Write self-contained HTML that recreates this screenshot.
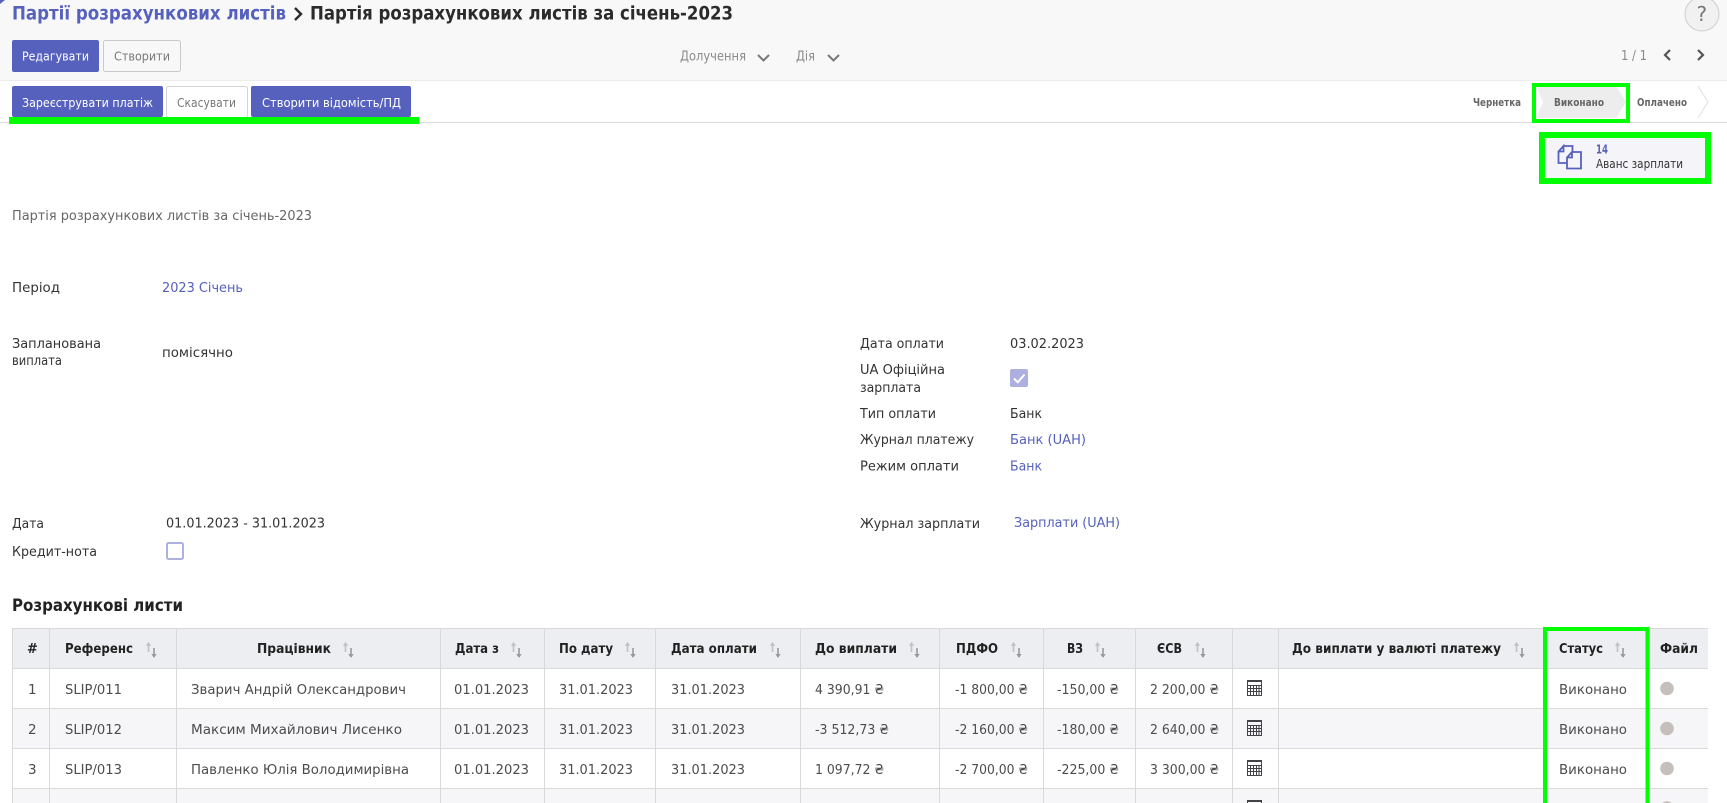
<!DOCTYPE html>
<html lang="uk">
<head>
<meta charset="utf-8">
<title>Партія розрахункових листів за січень-2023</title>
<style>
html,body{margin:0;padding:0;background:#fff;width:1727px;height:803px;overflow:hidden}
svg{display:block}
text{font-family:"DejaVu Sans","Liberation Sans",sans-serif;font-size:13.5px;fill:#3c3c3c;white-space:pre}
.b{font-weight:700}
.lnk{fill:#5661bd}
.lab{fill:#333}
.btn{fill:#fff;font-size:12.5px}
.sec{fill:#777;font-size:12.5px}
.st{fill:#666;font-size:10.5px;font-weight:700}
.th{fill:#222;font-size:13px;font-weight:700}
.td{fill:#4c4c4c}
</style>
</head>
<body>
<svg width="1727" height="803" viewBox="0 0 1727 803" xmlns="http://www.w3.org/2000/svg">
<defs>
<g id="sort">
<path d="M2.5 10V2.5" stroke="#c0c0c0" stroke-width="1.6" fill="none"/>
<path d="M-0.2 3.8L2.5 0L5.2 3.8Z" fill="#c0c0c0"/>
<path d="M8 6V13" stroke="#999" stroke-width="1.6" fill="none"/>
<path d="M5.3 12L8 16L10.700 12Z" fill="#999"/>
</g>
<g id="calc" fill="none" stroke="#434347" stroke-width="1">
<rect x="0.5" y="0.5" width="14" height="15"/>
<path d="M0.5 5.5H14.5M0.5 8.5H14.5M0.5 11.5H14.5M3.5 5.5V15.500M6.5 5.5V15.500M9.5 5.5V15.500M12 5.5V15.500"/>
<path d="M0.5 1.5H14.500"/>
</g>
</defs>

<!-- control panel -->
<rect x="0" y="0" width="1727" height="80" fill="#f8f8f8"/>
<rect x="0" y="80" width="1727" height="1" fill="#ececec"/>
<path d="M0 0H5L0 4Z" fill="#5661bd"/>
<text x="12" y="19.500" class="b lnk" style="font-size:18.500px" textLength="274" lengthAdjust="spacingAndGlyphs">Партії розрахункових листів</text>
<path d="M295 8L301 14L295 20" fill="none" stroke="#2b2b2b" stroke-width="2.400"/>
<text x="310" y="19.500" class="b" style="font-size:18.500px;fill:#2b2b2b" textLength="423" lengthAdjust="spacingAndGlyphs">Партія розрахункових листів за січень-2023</text>

<circle cx="1702" cy="14" r="17" fill="#f1f1f1" stroke="#cfcfcf"/>
<text x="1696.500" y="21" style="font-size:20px;fill:#777">?</text>

<rect x="12" y="40" width="87" height="32" rx="2" fill="#5661bd"/>
<text x="22" y="60.500" class="btn" textLength="67" lengthAdjust="spacingAndGlyphs">Редагувати</text>
<rect x="103.500" y="40.500" width="77" height="31" rx="2" fill="#f8f8f8" stroke="#c9c9c9"/>
<text x="114" y="60.500" class="sec" textLength="56" lengthAdjust="spacingAndGlyphs">Створити</text>

<text x="680" y="60.500" style="fill:#8a8a8a" textLength="66" lengthAdjust="spacingAndGlyphs">Долучення</text>
<path d="M758 55L763.500 60.500L769 55" fill="none" stroke="#77777c" stroke-width="2"/>
<text x="796" y="60.500" style="fill:#8a8a8a" textLength="19" lengthAdjust="spacingAndGlyphs">Дія</text>
<path d="M828 55L833.500 60.500L839 55" fill="none" stroke="#77777c" stroke-width="2"/>

<text x="1621" y="60" style="fill:#8a8a8a;font-size:13px" textLength="26" lengthAdjust="spacingAndGlyphs">1 / 1</text>
<path d="M1670 50L1665 55L1670 60" fill="none" stroke="#555" stroke-width="2.200"/>
<path d="M1698 50L1703 55L1698 60" fill="none" stroke="#555" stroke-width="2.200"/>

<!-- status bar -->
<rect x="0" y="122" width="1727" height="1" fill="#dadada"/>
<rect x="12" y="86" width="151" height="31" rx="2" fill="#5661bd"/>
<text x="22" y="107" class="btn" textLength="131" lengthAdjust="spacingAndGlyphs">Зареєструвати платіж</text>
<rect x="166.500" y="86.500" width="81" height="31" rx="2" fill="#fff" stroke="#d5d5d5"/>
<text x="177" y="107" class="sec" textLength="59" lengthAdjust="spacingAndGlyphs">Скасувати</text>
<rect x="251" y="86" width="160" height="31" rx="2" fill="#5661bd"/>
<text x="262" y="107" class="btn" textLength="139" lengthAdjust="spacingAndGlyphs">Створити відомість/ПД</text>
<rect x="9" y="117" width="410" height="7" fill="#00ff00"/>

<text x="1473" y="106" class="st" textLength="48" lengthAdjust="spacingAndGlyphs">Чернетка</text>
<path d="M1536 86H1616L1626 102L1616 118H1536L1543 102Z" fill="#ededed"/>
<text x="1554" y="106" class="st" textLength="50" lengthAdjust="spacingAndGlyphs">Виконано</text>
<rect x="1534" y="85" width="94" height="36" fill="none" stroke="#00ff00" stroke-width="4"/>
<text x="1637" y="106" class="st" textLength="50" lengthAdjust="spacingAndGlyphs">Оплачено</text>
<path d="M1698 86L1708 102L1698 118" fill="none" stroke="#e0e0e0"/>

<!-- smart button -->
<rect x="1545" y="138" width="160" height="40" fill="#f5f5f9"/>
<rect x="1542" y="135" width="166" height="46" fill="none" stroke="#00ff00" stroke-width="6"/>
<path d="M1563.500 146H1572.500V151.500M1566.500 163H1558.500V151.500L1563.500 146V151.500H1558.500" fill="none" stroke="#5661bd" stroke-width="1.800"/>
<path d="M1572 152H1581V168.500H1567V157.500L1572 152V157.500H1567" fill="none" stroke="#5661bd" stroke-width="1.800"/>
<text x="1596" y="153.500" class="b lnk" style="font-size:12px" textLength="12" lengthAdjust="spacingAndGlyphs">14</text>
<text x="1596" y="168" style="font-size:12px;fill:#333" textLength="87" lengthAdjust="spacingAndGlyphs">Аванс зарплати</text>

<!-- form -->
<text x="12" y="220" style="fill:#666" textLength="300" lengthAdjust="spacingAndGlyphs">Партія розрахункових листів за січень-2023</text>

<text x="12" y="292" class="lab" textLength="48" lengthAdjust="spacingAndGlyphs">Період</text>
<text x="162" y="292" class="lnk" textLength="81" lengthAdjust="spacingAndGlyphs">2023 Січень</text>
<text x="12" y="348" class="lab" textLength="89" lengthAdjust="spacingAndGlyphs">Запланована</text>
<text x="12" y="365" class="lab" textLength="50" lengthAdjust="spacingAndGlyphs">виплата</text>
<text x="162" y="357" class="lab" textLength="71" lengthAdjust="spacingAndGlyphs">помісячно</text>

<text x="860" y="348" class="lab" textLength="84" lengthAdjust="spacingAndGlyphs">Дата оплати</text>
<text x="1010" y="348" class="lab" textLength="74" lengthAdjust="spacingAndGlyphs">03.02.2023</text>
<text x="860" y="374" class="lab" textLength="85" lengthAdjust="spacingAndGlyphs">UA Офіційна</text>
<text x="860" y="392" class="lab" textLength="61" lengthAdjust="spacingAndGlyphs">зарплата</text>
<rect x="1010" y="369" width="18" height="18" rx="2" fill="#adb0de"/>
<path d="M1014 378.500L1017.800 382.300L1024.500 374.500" fill="none" stroke="#fff" stroke-width="2"/>
<text x="860" y="418" class="lab" textLength="76" lengthAdjust="spacingAndGlyphs">Тип оплати</text>
<text x="1010" y="418" class="lab" textLength="32" lengthAdjust="spacingAndGlyphs">Банк</text>
<text x="860" y="444" class="lab" textLength="114" lengthAdjust="spacingAndGlyphs">Журнал платежу</text>
<text x="1010" y="444" class="lnk" textLength="76" lengthAdjust="spacingAndGlyphs">Банк (UAH)</text>
<text x="860" y="470.500" class="lab" textLength="99" lengthAdjust="spacingAndGlyphs">Режим оплати</text>
<text x="1010" y="470.500" class="lnk" textLength="32" lengthAdjust="spacingAndGlyphs">Банк</text>

<text x="12" y="528" class="lab" textLength="32" lengthAdjust="spacingAndGlyphs">Дата</text>
<text x="166" y="527.500" class="lab" textLength="159" lengthAdjust="spacingAndGlyphs">01.01.2023 - 31.01.2023</text>
<text x="12" y="556" class="lab" textLength="85" lengthAdjust="spacingAndGlyphs">Кредит-нота</text>
<rect x="167" y="543" width="16" height="16" rx="1.500" fill="#fff" stroke="#adb0de" stroke-width="2"/>
<text x="860" y="528" class="lab" textLength="120" lengthAdjust="spacingAndGlyphs">Журнал зарплати</text>
<text x="1014" y="527" class="lnk" textLength="106" lengthAdjust="spacingAndGlyphs">Зарплати (UAH)</text>

<!-- table -->
<text x="12" y="611" class="b" style="font-size:16.500px;fill:#222" textLength="171" lengthAdjust="spacingAndGlyphs">Розрахункові листи</text>

<rect x="12" y="628" width="1696" height="40" fill="#edeef1"/>
<rect x="12" y="708" width="1696" height="40" fill="#f6f6f9"/>
<rect x="12" y="788" width="1696" height="15" fill="#f6f6f9"/>
<g fill="#d9d9d9">
<rect x="12" y="628" width="1696" height="1"/>
<rect x="12" y="668" width="1696" height="1"/>
<rect x="12" y="708" width="1696" height="1"/>
<rect x="12" y="748" width="1696" height="1"/>
<rect x="12" y="788" width="1696" height="1"/>
<rect x="12" y="628" width="1" height="175"/>
<rect x="49" y="628" width="1" height="175"/>
<rect x="176" y="628" width="1" height="175"/>
<rect x="440" y="628" width="1" height="175"/>
<rect x="544" y="628" width="1" height="175"/>
<rect x="655" y="628" width="1" height="175"/>
<rect x="800" y="628" width="1" height="175"/>
<rect x="939" y="628" width="1" height="175"/>
<rect x="1043" y="628" width="1" height="175"/>
<rect x="1135" y="628" width="1" height="175"/>
<rect x="1232" y="628" width="1" height="175"/>
<rect x="1278" y="628" width="1" height="175"/>
</g>

<text x="27" y="653" class="th">#</text>
<text x="65" y="653" class="th" textLength="68" lengthAdjust="spacingAndGlyphs">Референс</text>
<text x="257" y="653" class="th" textLength="74" lengthAdjust="spacingAndGlyphs">Працівник</text>
<text x="455" y="653" class="th" textLength="44" lengthAdjust="spacingAndGlyphs">Дата з</text>
<text x="559" y="653" class="th" textLength="54" lengthAdjust="spacingAndGlyphs">По дату</text>
<text x="671" y="653" class="th" textLength="86" lengthAdjust="spacingAndGlyphs">Дата оплати</text>
<text x="815" y="653" class="th" textLength="82" lengthAdjust="spacingAndGlyphs">До виплати</text>
<text x="956" y="653" class="th" textLength="42" lengthAdjust="spacingAndGlyphs">ПДФО</text>
<text x="1067" y="653" class="th" textLength="16" lengthAdjust="spacingAndGlyphs">ВЗ</text>
<text x="1157" y="653" class="th" textLength="25" lengthAdjust="spacingAndGlyphs">ЄСВ</text>
<text x="1292" y="653" class="th" textLength="209" lengthAdjust="spacingAndGlyphs">До виплати у валюті платежу</text>
<text x="1559" y="653" class="th" textLength="44" lengthAdjust="spacingAndGlyphs">Статус</text>
<text x="1660" y="653" class="th" textLength="38" lengthAdjust="spacingAndGlyphs">Файл</text>

<use href="#sort" x="146" y="642"/>
<use href="#sort" x="343" y="642"/>
<use href="#sort" x="511" y="642"/>
<use href="#sort" x="625" y="642"/>
<use href="#sort" x="770" y="642"/>
<use href="#sort" x="909" y="642"/>
<use href="#sort" x="1011" y="642"/>
<use href="#sort" x="1095" y="642"/>
<use href="#sort" x="1195" y="642"/>
<use href="#sort" x="1514" y="642"/>
<use href="#sort" x="1615" y="642"/>

<!-- row 1 -->
<text x="28" y="694" class="td">1</text>
<text x="65" y="694" class="td" textLength="57" lengthAdjust="spacingAndGlyphs">SLIP/011</text>
<text x="191" y="694" class="td" textLength="215" lengthAdjust="spacingAndGlyphs">Зварич Андрій Олександрович</text>
<text x="454" y="694" class="td" textLength="75" lengthAdjust="spacingAndGlyphs">01.01.2023</text>
<text x="559" y="694" class="td" textLength="74" lengthAdjust="spacingAndGlyphs">31.01.2023</text>
<text x="671" y="694" class="td" textLength="74" lengthAdjust="spacingAndGlyphs">31.01.2023</text>
<text x="815" y="694" class="td" textLength="69" lengthAdjust="spacingAndGlyphs">4 390,91 ₴</text>
<text x="955" y="694" class="td" textLength="73" lengthAdjust="spacingAndGlyphs">-1 800,00 ₴</text>
<text x="1057" y="694" class="td" textLength="62" lengthAdjust="spacingAndGlyphs">-150,00 ₴</text>
<text x="1150" y="694" class="td" textLength="69" lengthAdjust="spacingAndGlyphs">2 200,00 ₴</text>
<use href="#calc" x="1247" y="680"/>
<text x="1559" y="694" class="td" textLength="68" lengthAdjust="spacingAndGlyphs">Виконано</text>
<circle cx="1667" cy="688.500" r="6.800" fill="#c4bfbb"/>

<!-- row 2 -->
<text x="28" y="734" class="td">2</text>
<text x="65" y="734" class="td" textLength="57" lengthAdjust="spacingAndGlyphs">SLIP/012</text>
<text x="191" y="734" class="td" textLength="211" lengthAdjust="spacingAndGlyphs">Максим Михайлович Лисенко</text>
<text x="454" y="734" class="td" textLength="75" lengthAdjust="spacingAndGlyphs">01.01.2023</text>
<text x="559" y="734" class="td" textLength="74" lengthAdjust="spacingAndGlyphs">31.01.2023</text>
<text x="671" y="734" class="td" textLength="74" lengthAdjust="spacingAndGlyphs">31.01.2023</text>
<text x="815" y="734" class="td" textLength="74" lengthAdjust="spacingAndGlyphs">-3 512,73 ₴</text>
<text x="955" y="734" class="td" textLength="73" lengthAdjust="spacingAndGlyphs">-2 160,00 ₴</text>
<text x="1057" y="734" class="td" textLength="62" lengthAdjust="spacingAndGlyphs">-180,00 ₴</text>
<text x="1150" y="734" class="td" textLength="69" lengthAdjust="spacingAndGlyphs">2 640,00 ₴</text>
<use href="#calc" x="1247" y="720"/>
<text x="1559" y="734" class="td" textLength="68" lengthAdjust="spacingAndGlyphs">Виконано</text>
<circle cx="1667" cy="728.500" r="6.800" fill="#c4bfbb"/>

<!-- row 3 -->
<text x="28" y="774" class="td">3</text>
<text x="65" y="774" class="td" textLength="57" lengthAdjust="spacingAndGlyphs">SLIP/013</text>
<text x="191" y="774" class="td" textLength="218" lengthAdjust="spacingAndGlyphs">Павленко Юлія Володимирівна</text>
<text x="454" y="774" class="td" textLength="75" lengthAdjust="spacingAndGlyphs">01.01.2023</text>
<text x="559" y="774" class="td" textLength="74" lengthAdjust="spacingAndGlyphs">31.01.2023</text>
<text x="671" y="774" class="td" textLength="74" lengthAdjust="spacingAndGlyphs">31.01.2023</text>
<text x="815" y="774" class="td" textLength="69" lengthAdjust="spacingAndGlyphs">1 097,72 ₴</text>
<text x="955" y="774" class="td" textLength="73" lengthAdjust="spacingAndGlyphs">-2 700,00 ₴</text>
<text x="1057" y="774" class="td" textLength="62" lengthAdjust="spacingAndGlyphs">-225,00 ₴</text>
<text x="1150" y="774" class="td" textLength="69" lengthAdjust="spacingAndGlyphs">3 300,00 ₴</text>
<use href="#calc" x="1247" y="760"/>
<text x="1559" y="774" class="td" textLength="68" lengthAdjust="spacingAndGlyphs">Виконано</text>
<circle cx="1667" cy="768.500" r="6.800" fill="#c4bfbb"/>

<!-- row 4 (cut off) -->
<use href="#calc" x="1247" y="800"/>
<circle cx="1667" cy="808" r="6.800" fill="#c4bfbb"/>

<!-- status column highlight -->
<path d="M1545 806V629H1647.500V806" fill="none" stroke="#00ff00" stroke-width="4"/>
</svg>
</body>
</html>
